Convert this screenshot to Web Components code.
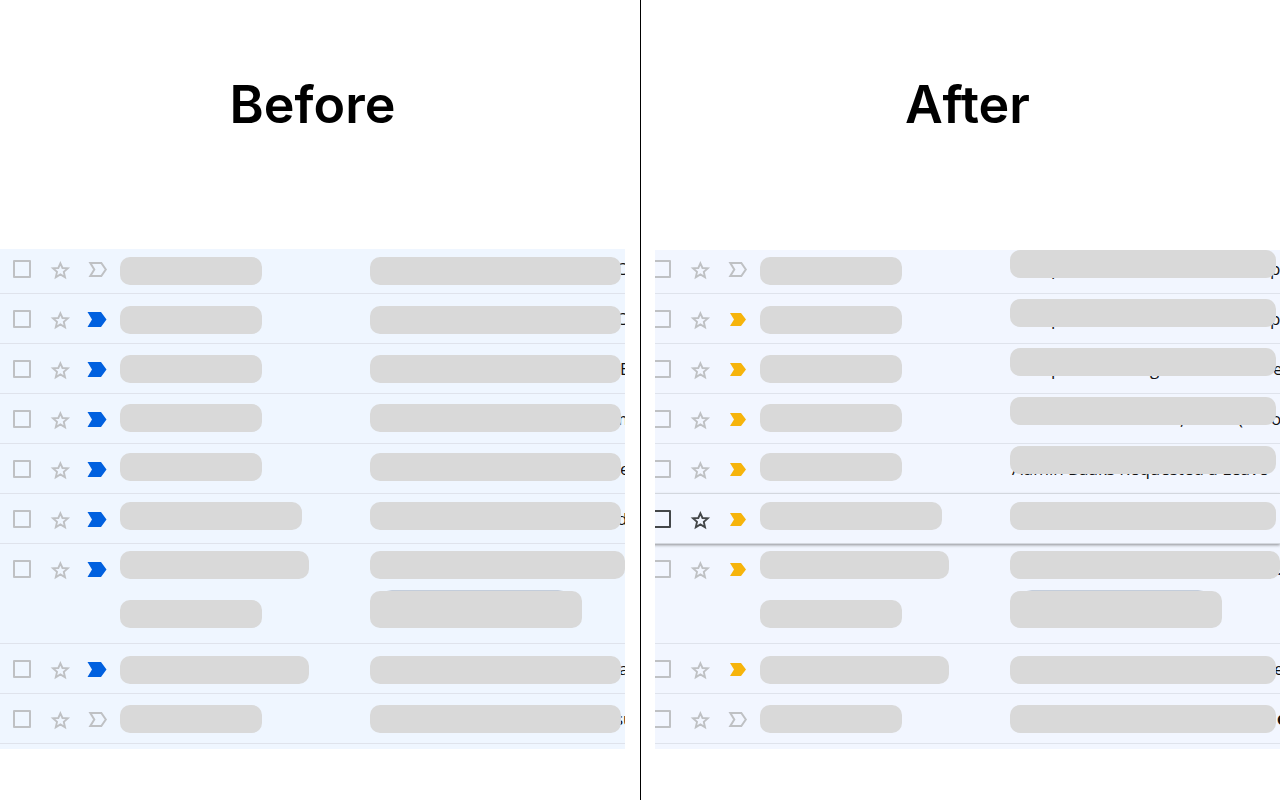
<!DOCTYPE html>
<html lang="en">
<head>
<meta charset="utf-8">
<title>Before / After</title>
<style>
    body {
        margin: 0;
        background: #fff;
        font-family: Inter, "Liberation Sans", sans-serif;
    }
</style>
</head>
<body>
<compare-board></compare-board>

<script>
const boardTemplate = document.createElement('template');
boardTemplate.innerHTML = `
<style>
    :host {
        display: grid;
        grid-template-columns: 1fr 1fr;
        min-height: 100vh;
    }
    compare-pane.before {
        padding-right: 15px;
        --list-bg: #eff6ff;
        --marker: #0060df;
        --crop: 0px;
    }
    compare-pane.after {
        padding-left: 15px;
        box-shadow: inset 1px 0 #000;
        --list-bg: #f2f6ff;
        --marker: #f6b40c;
        --crop: 15px;
        --head: 250px;
        --first-row: 44px;
        --name-top: 7px;
        --subject-top: 0px;
        --subject-jump: 28px;
    }
</style>
<compare-pane class="before">
    <span slot="title">Before</span>
    <mail-row first marker="none" cut="244px" text="C"></mail-row>
    <mail-row marker="big" cut="244px" text="C"></mail-row>
    <mail-row marker="big" cut="248px" text="E"></mail-row>
    <mail-row marker="big" cut="246px" text="m"></mail-row>
    <mail-row marker="big" cut="248px" text="e"></mail-row>
    <mail-row marker="big" cut="245px" text="d"></mail-row>
    <mail-row tall marker="big"></mail-row>
    <mail-row marker="big" cut="247px" text="a"></mail-row>
    <mail-row marker="none" cut="243px" text="su"></mail-row>
</compare-pane>
<compare-pane class="after">
    <span slot="title">After</span>
    <mail-row first marker="none" cut="39px 219px" text="p p"></mail-row>
    <mail-row marker="small" cut="39px 203px 16px" text="p , p"></mail-row>
    <mail-row marker="small" cut="39px 99px 123px" text="p g e"></mail-row>
    <mail-row marker="small" cut="168px 58px 33px" text=", ( o"></mail-row>
    <mail-row marker="small"><span>Admin Baaks Requested a Leave</span></mail-row>
    <mail-row hover marker="small"></mail-row>
    <mail-row tall marker="small" cut="265px" text="."></mail-row>
    <mail-row marker="small" cut="262px" text="e"></mail-row>
    <mail-row marker="none" cut="265px" text="e" bold></mail-row>
</compare-pane>
`;

class CompareBoard extends HTMLElement {
    constructor() {
        super();
        this.root = this.attachShadow({ mode: 'open' });
        this.root.append(boardTemplate.content.cloneNode(true));
    }
}

// a titled mail list, with the private parts covered by grey bars
const paneTemplate = document.createElement('template');
paneTemplate.innerHTML = `
<style>
    :host {
        display: block;
        min-width: 0;
    }
    header {
        box-sizing: border-box;
        height: var(--head, 249px);
        padding-top: 73px;
        text-align: center;
    }
    h1 {
        margin: 0;
        font-size: 52px;
        line-height: 64px;
        font-weight: 600;
        font-variant-ligatures: none;
        color: #000;
    }
    .list {
        position: relative;
        overflow: hidden;
        padding-bottom: 5px;
        background: var(--list-bg);
    }
    .rows {
        margin-left: calc(0px - var(--crop));
    }
    .bars {
        position: absolute;
        inset: 0;
        margin-left: calc(0px - var(--crop));
        padding-left: 120px;
        display: grid;
        grid-template-columns: 250px 1fr;
        pointer-events: none;
    }
    .column {
        display: flex;
        flex-direction: column;
        gap: 21px;
        padding-top: var(--name-top, 8px);
    }
    .subjects {
        padding-top: var(--subject-top, 8px);
    }
    .rest {
        display: flex;
        flex-direction: column;
        gap: 21px;
    }
    .names .rest {
        margin-top: 7px;
    }
    .subjects .rest {
        margin-top: calc(var(--subject-jump, 21px) - 21px);
    }
    .pair {
        display: grid;
        gap: 12px;
        margin-bottom: 7px;
    }
</style>
<header><h1><slot name="title"></slot></h1></header>
<div class="list">
    <div class="rows"><slot></slot></div>
    <div class="bars">
        <div class="column names">
            <mask-bar></mask-bar>
            <mask-bar></mask-bar>
            <mask-bar></mask-bar>
            <mask-bar></mask-bar>
            <mask-bar></mask-bar>
            <mask-bar size="medium"></mask-bar>
            <mask-bar size="large"></mask-bar>
            <mask-bar></mask-bar>
            <div class="rest">
                <mask-bar size="large"></mask-bar>
                <mask-bar></mask-bar>
            </div>
        </div>
        <div class="column subjects">
            <mask-bar size="fill"></mask-bar>
            <mask-bar size="fill"></mask-bar>
            <mask-bar size="fill"></mask-bar>
            <mask-bar size="fill"></mask-bar>
            <mask-bar size="fill"></mask-bar>
            <div class="rest">
                <mask-bar size="fill"></mask-bar>
                <div class="pair">
                    <mask-bar size="full"></mask-bar>
                    <mask-bar size="chip"></mask-bar>
                </div>
                <mask-bar size="fill"></mask-bar>
                <mask-bar size="fill"></mask-bar>
            </div>
        </div>
    </div>
</div>
`;

class ComparePane extends HTMLElement {
    constructor() {
        super();
        this.root = this.attachShadow({ mode: 'open' });
        this.root.append(paneTemplate.content.cloneNode(true));
    }
}

const barTemplate = document.createElement('template');
barTemplate.innerHTML = `
<style>
    :host {
        display: block;
        width: 142px;
        height: 28px;
        border-radius: 10px;
        background: #d9d9d9;
    }
    :host([size="medium"]) { width: 182px; }
    :host([size="large"]) { width: 189px; }
    :host([size="fill"]) { width: auto; margin-right: 4px; }
    :host([size="full"]) { width: auto; }
    :host([size="chip"]) { width: 212px; height: 37px; }
</style>
`;

class MaskBar extends HTMLElement {
    constructor() {
        super();
        this.root = this.attachShadow({ mode: 'open' });
        this.root.append(barTemplate.content.cloneNode(true));
    }
}

const markers = {
    none: '<path d="M3.3 3H14.3l4.5 6.5-4.5 6.5H3.3l4-6.5z" fill="none" stroke="#bfc1c4" stroke-width="2"/>',
    big: '<path d="M.5 2H14l5.5 7.5L14 17H.5L5 9.5z" fill="var(--marker)"/>',
    small: '<path d="M3 3h11l5 6.5-5 6.5H3l4-6.5z" fill="var(--marker)"/>'
};

const rowTemplate = document.createElement('template');
rowTemplate.innerHTML = `
<style>
    :host {
        --icon: #bfc1c4;
        box-sizing: border-box;
        display: grid;
        grid-template-columns: 18px 20px 20px 1fr;
        column-gap: 18px;
        align-items: start;
        align-content: end;
        height: 50px;
        padding: 0 0 15px 13px;
        border-bottom: 1px solid #dfe3ec;
    }
    :host([first]) {
        height: var(--first-row, 45px);
    }
    :host([tall]) {
        height: 100px;
        padding-bottom: 23px;
        row-gap: 12px;
    }
    :host([hover]) {
        --icon: #444749;
        position: relative;
        border-bottom-color: #d4d8df;
        box-shadow: 0 -1px 0 #d3d7de, 0 1px 3px rgba(70, 70, 70, .6);
        background: var(--list-bg);
    }
    input {
        appearance: none;
        box-sizing: border-box;
        width: 18px;
        height: 18px;
        margin: 0;
        border: 2px solid var(--icon);
        border-radius: 1px;
    }
    button {
        display: block;
        width: 20px;
        height: 18px;
        padding: 0;
        border: 0;
        background: none;
        color: var(--icon);
    }
    svg {
        display: block;
        overflow: visible;
    }
    .subject {
        display: flex;
        height: 18px;
        margin-left: 247px;
        white-space: nowrap;
        font: 17px/18px "Open Sans", "Noto Sans", sans-serif;
        color: #111;
    }
    :host([bold]) .subject {
        font-weight: 700;
    }
    .subject i {
        flex: none;
        width: 0;
        font-style: normal;
    }
    .chip {
        display: none;
    }
    :host([tall]) .chip {
        display: block;
        grid-column: 4;
        box-sizing: border-box;
        width: 196px;
        height: 30px;
        margin-left: 252px;
        border: 1px solid #c3cddb;
        border-radius: 15px;
    }
</style>
<input type="checkbox" aria-label="Select">
<button type="button" aria-label="Star">
    <svg width="20" height="18" viewBox="0 0 20 18"><path d="M11.4 3.3L13.5 8 18.8 8.4 14.8 11.900 16 17.300 11.400 14.400 6.800 17.300 8 11.900 4 8.400 9.300 8z" fill="none" stroke="currentColor" stroke-width="1.900"/></svg>
</button>
<button type="button" aria-label="Importance" class="marker"></button>
<div class="subject"><slot></slot></div>
<div class="chip"></div>
`;

class MailRow extends HTMLElement {
    constructor() {
        super();
        this.root = this.attachShadow({ mode: 'open' });
        this.root.append(rowTemplate.content.cloneNode(true));
    }

    connectedCallback() {
        this.root.querySelector('.marker').innerHTML =
            `<svg width="20" height="18" viewBox="0 0 20 18">${markers[this.getAttribute('marker')]}</svg>`;

        // pieces of the subject that stick out from under the bar
        if (!this.hasAttribute('text')) return;
        const gaps = this.getAttribute('cut').split(' ');
        const subject = this.root.querySelector('.subject');
        this.getAttribute('text').split(' ').forEach((piece, i) => {
            const el = document.createElement('i');
            el.textContent = piece;
            el.style.marginLeft = gaps[i];
            subject.append(el);
        });
    }
}

customElements.define('mask-bar', MaskBar);
customElements.define('mail-row', MailRow);
customElements.define('compare-pane', ComparePane);
customElements.define('compare-board', CompareBoard);
</script>
</body>
</html>
